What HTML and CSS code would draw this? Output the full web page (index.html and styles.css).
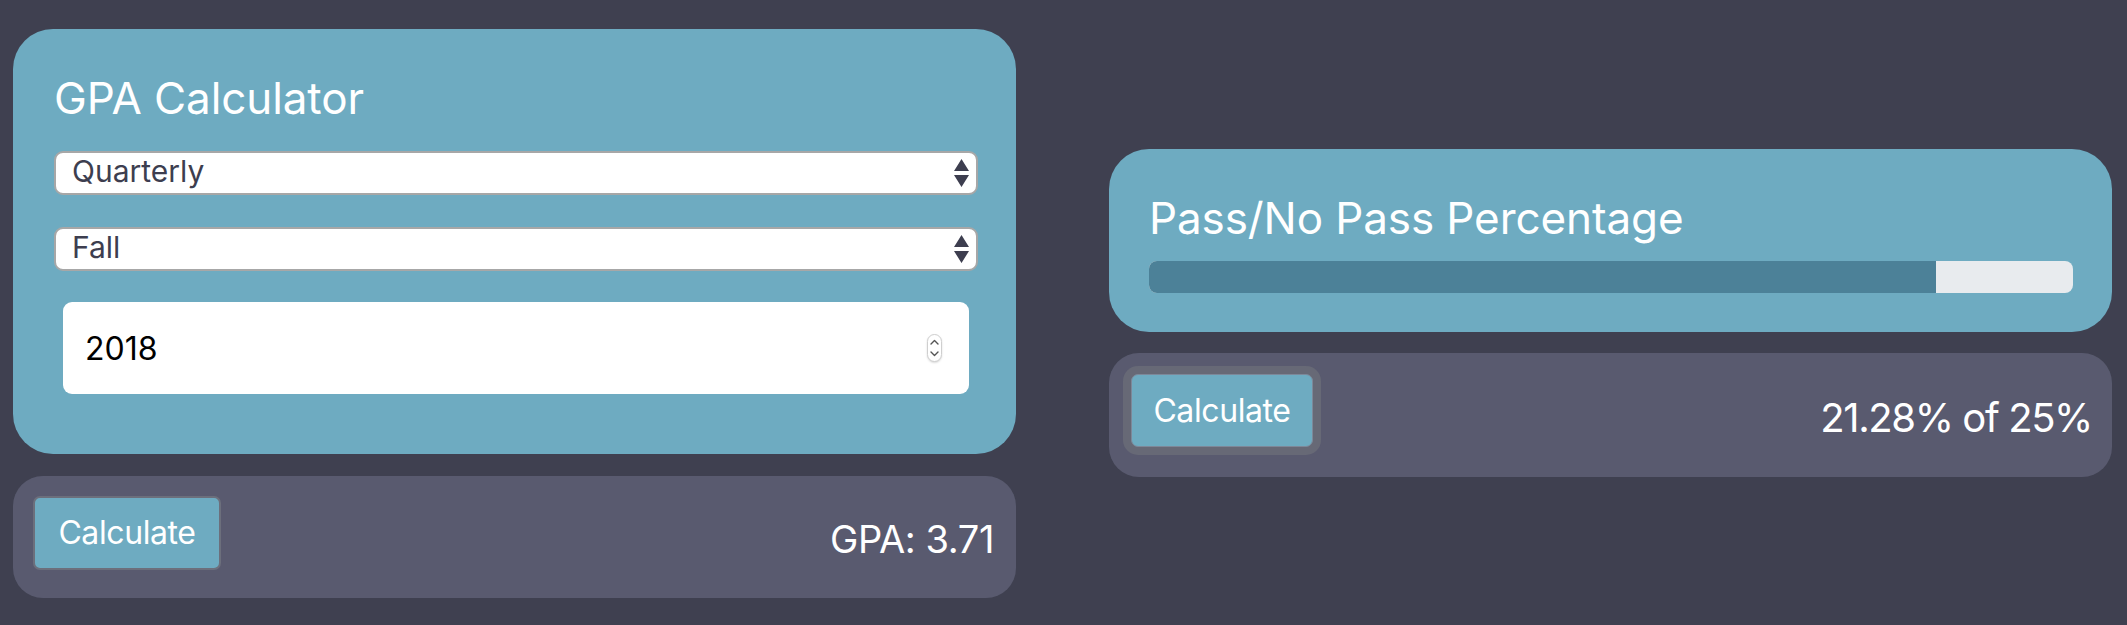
FILE: index.html
```html
<!DOCTYPE html>
<html lang="en">
<head>
<meta charset="utf-8">
<title>GPA Calculator</title>
<link rel="stylesheet" href="styles.css">
</head>
<body>
<div class="page">
  <div class="col">
    <section class="card card-main">
      <h2 class="title">GPA Calculator</h2>
      <div class="select-wrap">
        <select class="select"><option>Quarterly</option><option>Semester</option></select>
        <svg class="select-arrows" width="15" height="28" viewBox="0 0 15 28"><path d="M7.5 0 L15 12 L0 12 Z M0 16 L15 16 L7.5 28 Z" fill="#3d3e4f"/></svg>
      </div>
      <div class="select-wrap select-second">
        <select class="select"><option>Fall</option><option>Winter</option><option>Spring</option></select>
        <svg class="select-arrows" width="15" height="28" viewBox="0 0 15 28"><path d="M7.5 0 L15 12 L0 12 Z M0 16 L15 16 L7.5 28 Z" fill="#3d3e4f"/></svg>
      </div>
      <div class="number-wrap">
        <input class="number" type="text" value="2018">
        <span class="spinner"><svg width="9" height="20" viewBox="0 0 9 20"><path d="M1 6 L4.5 2.5 L8 6 M1 14 L4.5 17.5 L8 14" fill="none" stroke="#555" stroke-width="1.4" stroke-linecap="round" stroke-linejoin="round"/></svg></span>
      </div>
    </section>
    <section class="card card-foot card-foot-left">
      <button class="btn">Calculate</button>
      <span class="result result-gpa">GPA: 3.71</span>
    </section>
  </div>
  <div class="col">
    <section class="card card-pass">
      <h2 class="title">Pass/No Pass Percentage</h2>
      <div class="progress"><div class="progress-fill" style="width: 85.12%"></div></div>
    </section>
    <section class="card card-foot card-foot-right">
      <button class="btn btn-focus">Calculate</button>
      <span class="result result-pass">21.28% of 25%</span>
    </section>
  </div>
</div>
</body>
</html>
```
FILE: styles.css
```css
* { box-sizing: border-box; }
html, body {
  margin: 0;
  padding: 0;
  background: #3f4050;
  font-family: Inter, "Noto Sans", "Liberation Sans", sans-serif;
}
.page {
  height: 625px;
  display: flex;
  align-items: center;
  padding: 1px 0 0 13px;
  gap: 93px;
}
.col {
  width: 1003px;
  display: flex;
  flex-direction: column;
}
.card {
  background: #6eabc1;
  border-radius: 40px;
}
.card-main {
  height: 425px;
  padding: 43px 38px 0 41px;
}
.card-pass {
  height: 183px;
  padding: 43px 39px 0 40px;
}
.title {
  margin: 0;
  font-size: 44px;
  line-height: 52.8px;
  font-weight: 400;
  color: #fff;
  letter-spacing: -0.1px;
}
.card-main .title { margin-bottom: 27px; }
.card-pass .title { margin-bottom: 16px; }

.select-wrap {
  position: relative;
  height: 44px;
}
.select-second { margin-top: 32px; }
.select {
  -webkit-appearance: none;
  appearance: none;
  width: 100%;
  height: 44px;
  border: 2px solid #a7a7a7;
  border-radius: 9px;
  background: #fff;
  color: #3d3e4f;
  font-family: inherit;
  font-size: 30px;
  padding: 0 0 3px 16px;
  line-height: 37px;
  outline: none;
}
.select-arrows {
  position: absolute;
  right: 9px;
  top: 8px;
  pointer-events: none;
}
.number-wrap {
  position: relative;
  margin: 31px 9px 0 9px;
  height: 92px;
}
.number {
  width: 100%;
  height: 92px;
  border: none;
  border-radius: 9px;
  background: #fff;
  color: #000;
  font-family: inherit;
  font-size: 32px;
  padding: 0 0 0 22px;
  outline: none;
}
.spinner {
  position: absolute;
  right: 27px;
  top: 32px;
  width: 15px;
  height: 28px;
  border: 1px solid #cfcfcf;
  border-radius: 8px;
  background: #fff;
  box-shadow: 0 1px 2px rgba(0,0,0,0.15);
  display: flex;
  align-items: center;
  justify-content: center;
}
.progress {
  height: 32px;
  background: #e8ebee;
  border-radius: 8px;
  overflow: hidden;
}
.progress-fill {
  height: 100%;
  background: #4c8198;
}
.card-foot {
  margin-top: 22px;
  background: #595a6f;
  border-radius: 30px;
  display: flex;
  align-items: center;
  justify-content: space-between;
}
.card-foot-left {
  height: 122px;
  padding: 20px 22px 28px 20px;
}
.card-foot-right {
  margin-top: 21px;
  height: 124px;
  padding: 21px 20px 30px 22px;
}
.btn {
  width: 188px;
  height: 74px;
  border: 2px solid #6c6f7c;
  border-radius: 7px;
  background: #6eabc1;
  color: #fff;
  font-family: inherit;
  font-size: 32px;
  padding: 0;
  letter-spacing: -0.4px;
}
.btn-focus {
  width: 182px;
  height: 73px;
  border: 1px solid #7d8899;
  box-shadow: 0 0 0 8px #676976;
}
.result {
  color: #fff;
  font-weight: 400;
}
.result-gpa {
  font-size: 38px;
  letter-spacing: -0.4px;
  padding-top: 13px;
}
.result-pass {
  font-size: 40px;
  letter-spacing: -1.4px;
  padding-top: 14px;
}
```
